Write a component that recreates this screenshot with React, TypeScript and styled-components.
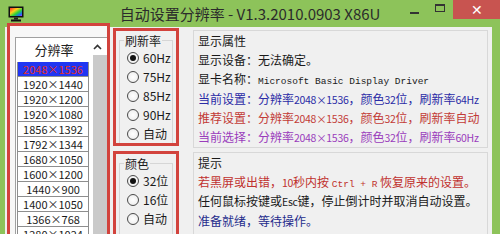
import styled, { createGlobalStyle } from 'styled-components';

const GlobalStyle = createGlobalStyle`
  html, body {
    margin: 0;
    padding: 0;
    background: #8dc35a;
  }
  * {
    box-sizing: border-box;
  }
`;

const cjk = `"Noto Sans CJK SC", "Noto Sans", sans-serif`;
const mono = `"Liberation Mono", "Noto Sans CJK SC", monospace`;

const resolutions = [
  '2048×1536',
  '1920×1440',
  '1920×1200',
  '1920×1080',
  '1856×1392',
  '1792×1344',
  '1680×1050',
  '1600×1200',
  '1440×900',
  '1400×1050',
  '1366×768',
  '1280×1024',
];

const Window = styled.div`
  width: 500px;
  height: 234px;
  overflow: hidden;
  background: #8dc35a;
  display: flex;
  flex-direction: column;
  font-family: ${cjk};
`;

const TitleBar = styled.div`
  height: 27px;
  flex: none;
  display: grid;
  grid-template-columns: 1fr auto 1fr;
  align-items: start;
`;

const IconSlot = styled.div`
  padding: 6px 0 0 8px;
  display: flex;
`;

const Title = styled.div`
  font-size: 15px;
  line-height: 28px;
  color: #2b2b2b;
  white-space: nowrap;
`;

const Controls = styled.div`
  display: flex;
  justify-content: flex-end;
  align-items: flex-start;
`;

const CtlButton = styled.div<{ $close?: boolean }>`
  width: ${({ $close }) => ($close ? '47px' : '26px')};
  height: 19px;
  display: flex;
  align-items: center;
  justify-content: center;
  background: ${({ $close }) => ($close ? '#c85450' : 'transparent')};
  color: ${({ $close }) => ($close ? '#fff' : '#333')};
  font-family: "Liberation Sans", sans-serif;
  font-size: 14px;
`;

const MinGlyph = styled.span`
  width: 9px;
  height: 2px;
  margin-top: 6px;
  background: #333;
`;

const MaxGlyph = styled.span`
  width: 10px;
  height: 8px;
  border: 1px solid #333;
  border-top-width: 2px;
  margin-top: -4px;
`;

const Client = styled.div`
  flex: 1;
  margin: 0 8px 0 5px;
  background: #f0f0f0;
  display: flex;
  align-items: flex-start;
`;

const RedBox = styled.div`
  border: 3px solid #d2433d;
`;

const ListPanel = styled(RedBox)`
  margin: -4px 0 0 2px;
  width: 103px;
  height: 230px;
  padding: 11px 0 0 5px;
  background: #f7f7f7;
`;

const ListBox = styled.div`
  display: flex;
  height: 100%;
  background: #fff;
  border-left: 1px solid #a0a0a0;
  border-top: 1px solid #a0a0a0;
`;

const ListMain = styled.div`
  width: 75px;
  padding-left: 1px;
`;

const ListHeader = styled.div`
  height: 24px;
  line-height: 24px;
  text-align: center;
  font-size: 13px;
  color: #222;
`;

const Row = styled.div<{ $selected?: boolean }>`
  width: 72px;
  height: 15px;
  line-height: 14px;
  text-align: center;
  font-size: 11px;
  color: ${({ $selected }) => ($selected ? '#e0302a' : '#1a1a1a')};
  background: ${({ $selected }) => ($selected ? '#2036f2' : '#fff')};
  border: 1px solid #8e8e8e;
  border-top: none;
`;

const ScrollCol = styled.div`
  flex: 1;
  display: flex;
  flex-direction: column;
`;

const ScrollArrow = styled.div`
  height: 17px;
  display: flex;
  justify-content: center;
  align-items: center;
  padding-right: 3px;
`;

const ScrollTrack = styled.div`
  flex: 1;
  margin-left: 2px;
  background: #cacaca;
`;

const OptionColumn = styled.div`
  width: 66px;
  margin-left: 3px;
  display: flex;
  flex-direction: column;
  gap: 5px;
`;

const OptionBox = styled(RedBox)<{ $height: number; $top: number }>`
  height: ${({ $height }) => $height}px;
  margin-top: ${({ $top }) => $top}px;
  overflow: hidden;
  padding: 0 3px;
`;

const Frame = styled.div`
  margin-top: 9px;
  border: 1px solid #d6d6d6;
  padding: 0 0 4px 4px;
  height: 200px;
`;

const Legend = styled.div`
  margin-top: -8px;
  width: fit-content;
  padding: 0 1px;
  background: #f0f0f0;
  font-size: 12px;
  line-height: 15px;
  color: #1a1a1a;
`;

const RadioRow = styled.div`
  height: 19px;
  display: flex;
  align-items: center;
  padding-left: 3px;
  font-size: 12px;
  color: #1a1a1a;
  &:first-of-type {
    margin-top: 1px;
  }
`;

const RadioDot = styled.span<{ $checked?: boolean }>`
  width: 12px;
  height: 12px;
  border-radius: 50%;
  border: 1px solid #4a4a4a;
  background: radial-gradient(circle, #fff 0, #f2f2f2 60%, #dcdcdc 100%);
  margin-right: 4px;
  display: flex;
  align-items: center;
  justify-content: center;
  &::after {
    content: '';
    width: 6px;
    height: 6px;
    border-radius: 50%;
    background: ${({ $checked }) => ($checked ? '#111' : 'transparent')};
  }
`;

const InfoColumn = styled.div`
  flex: 1;
  margin: 3px 4px 0 14px;
  display: flex;
  flex-direction: column;
  gap: 4px;
`;

const InfoGroup = styled.div<{ $height: number }>`
  height: ${({ $height }) => $height}px;
  border: 1px solid #d8d8d8;
  padding: 0 0 0 4px;
  overflow: hidden;
`;

const Line = styled.div<{ $color?: string }>`
  height: 19.2px;
  line-height: 19.2px;
  font-size: 12px;
  white-space: nowrap;
  color: ${({ $color }) => $color ?? '#1a1a1a'};
`;

const Mono = styled.span`
  font-family: ${mono};
  font-size: 9.5px;
  line-height: 1;
`;

const Num = styled.span`
  font-size: 10.5px;
  line-height: 1;
  letter-spacing: -0.3px;
`;

const AppIcon = () => (
  <svg width="16" height="16" viewBox="0 0 16 16">
    <defs>
      <linearGradient id="scr" x1="0" y1="0" x2="1" y2="1">
        <stop offset="0" stopColor="#ff2a2a" />
        <stop offset="0.35" stopColor="#ffd21a" />
        <stop offset="0.6" stopColor="#2bd43a" />
        <stop offset="0.85" stopColor="#1a6cff" />
        <stop offset="1" stopColor="#c02cff" />
      </linearGradient>
    </defs>
    <rect x="0.5" y="0.5" width="15" height="11" fill="#111" />
    <rect x="2" y="2" width="12" height="8" fill="url(#scr)" />
    <rect x="6" y="11.5" width="4" height="2" fill="#222" />
    <rect x="3" y="13.5" width="10" height="2" fill="#111" />
  </svg>
);

const UpArrow = () => (
  <svg width="9" height="6" viewBox="0 0 9 6">
    <path d="M1 5 L4.5 1.5 L8 5" stroke="#333" strokeWidth="1.6" fill="none" />
  </svg>
);

const Radio = ({ label, checked }: { label: string; checked?: boolean }) => (
  <RadioRow>
    <RadioDot $checked={checked} />
    {label}
  </RadioRow>
);

export default function App() {
  return (
    <>
      <GlobalStyle />
      <Window>
        <TitleBar>
          <IconSlot>
            <AppIcon />
          </IconSlot>
          <Title>自动设置分辨率 - V1.3.2010.0903 X86U</Title>
          <Controls>
            <CtlButton>
              <MinGlyph />
            </CtlButton>
            <CtlButton>
              <MaxGlyph />
            </CtlButton>
            <CtlButton $close>✕</CtlButton>
          </Controls>
        </TitleBar>
        <Client>
          <ListPanel>
            <ListBox>
              <ListMain>
                <ListHeader>分辨率</ListHeader>
                {resolutions.map((r, i) => (
                  <Row key={r} $selected={i === 0}>
                    {r}
                  </Row>
                ))}
              </ListMain>
              <ScrollCol>
                <ScrollArrow>
                  <UpArrow />
                </ScrollArrow>
                <ScrollTrack />
              </ScrollCol>
            </ListBox>
          </ListPanel>

          <OptionColumn>
            <OptionBox $height={118} $top={1}>
              <Frame>
                <Legend>刷新率</Legend>
                <Radio label="60Hz" checked />
                <Radio label="75Hz" />
                <Radio label="85Hz" />
                <Radio label="90Hz" />
                <Radio label="自动" />
              </Frame>
            </OptionBox>
            <OptionBox $height={100} $top={0}>
              <Frame>
                <Legend>颜色</Legend>
                <Radio label="32位" checked />
                <Radio label="16位" />
                <Radio label="自动" />
              </Frame>
            </OptionBox>
          </OptionColumn>

          <InfoColumn>
            <InfoGroup $height={118}>
              <Line>显示属性</Line>
              <Line>显示设备：无法确定。</Line>
              <Line>
                显卡名称：<Mono>Microsoft Basic Display Driver</Mono>
              </Line>
              <Line $color="#2b2ba6">
                当前设置：分辨率<Num>2048×1536</Num>，颜色<Num>32</Num>位，刷新率<Num>64Hz</Num>
              </Line>
              <Line $color="#c23a36">
                推荐设置：分辨率<Num>2048×1536</Num>，颜色<Num>32</Num>位，刷新率自动
              </Line>
              <Line $color="#9a3cbc">
                当前选择：分辨率<Num>2048×1536</Num>，颜色<Num>32</Num>位，刷新率<Num>60Hz</Num>
              </Line>
            </InfoGroup>
            <InfoGroup $height={100}>
              <Line>提示</Line>
              <Line $color="#c0302e">
                若黑屏或出错，<Num>10</Num>秒内按 <Mono>Ctrl + R</Mono> 恢复原来的设置。
              </Line>
              <Line>
                任何鼠标按键或<Num>Esc</Num>键，停止倒计时并取消自动设置。
              </Line>
              <Line $color="#1f2c8c">准备就绪，等待操作。</Line>
            </InfoGroup>
          </InfoColumn>
        </Client>
      </Window>
    </>
  );
}
